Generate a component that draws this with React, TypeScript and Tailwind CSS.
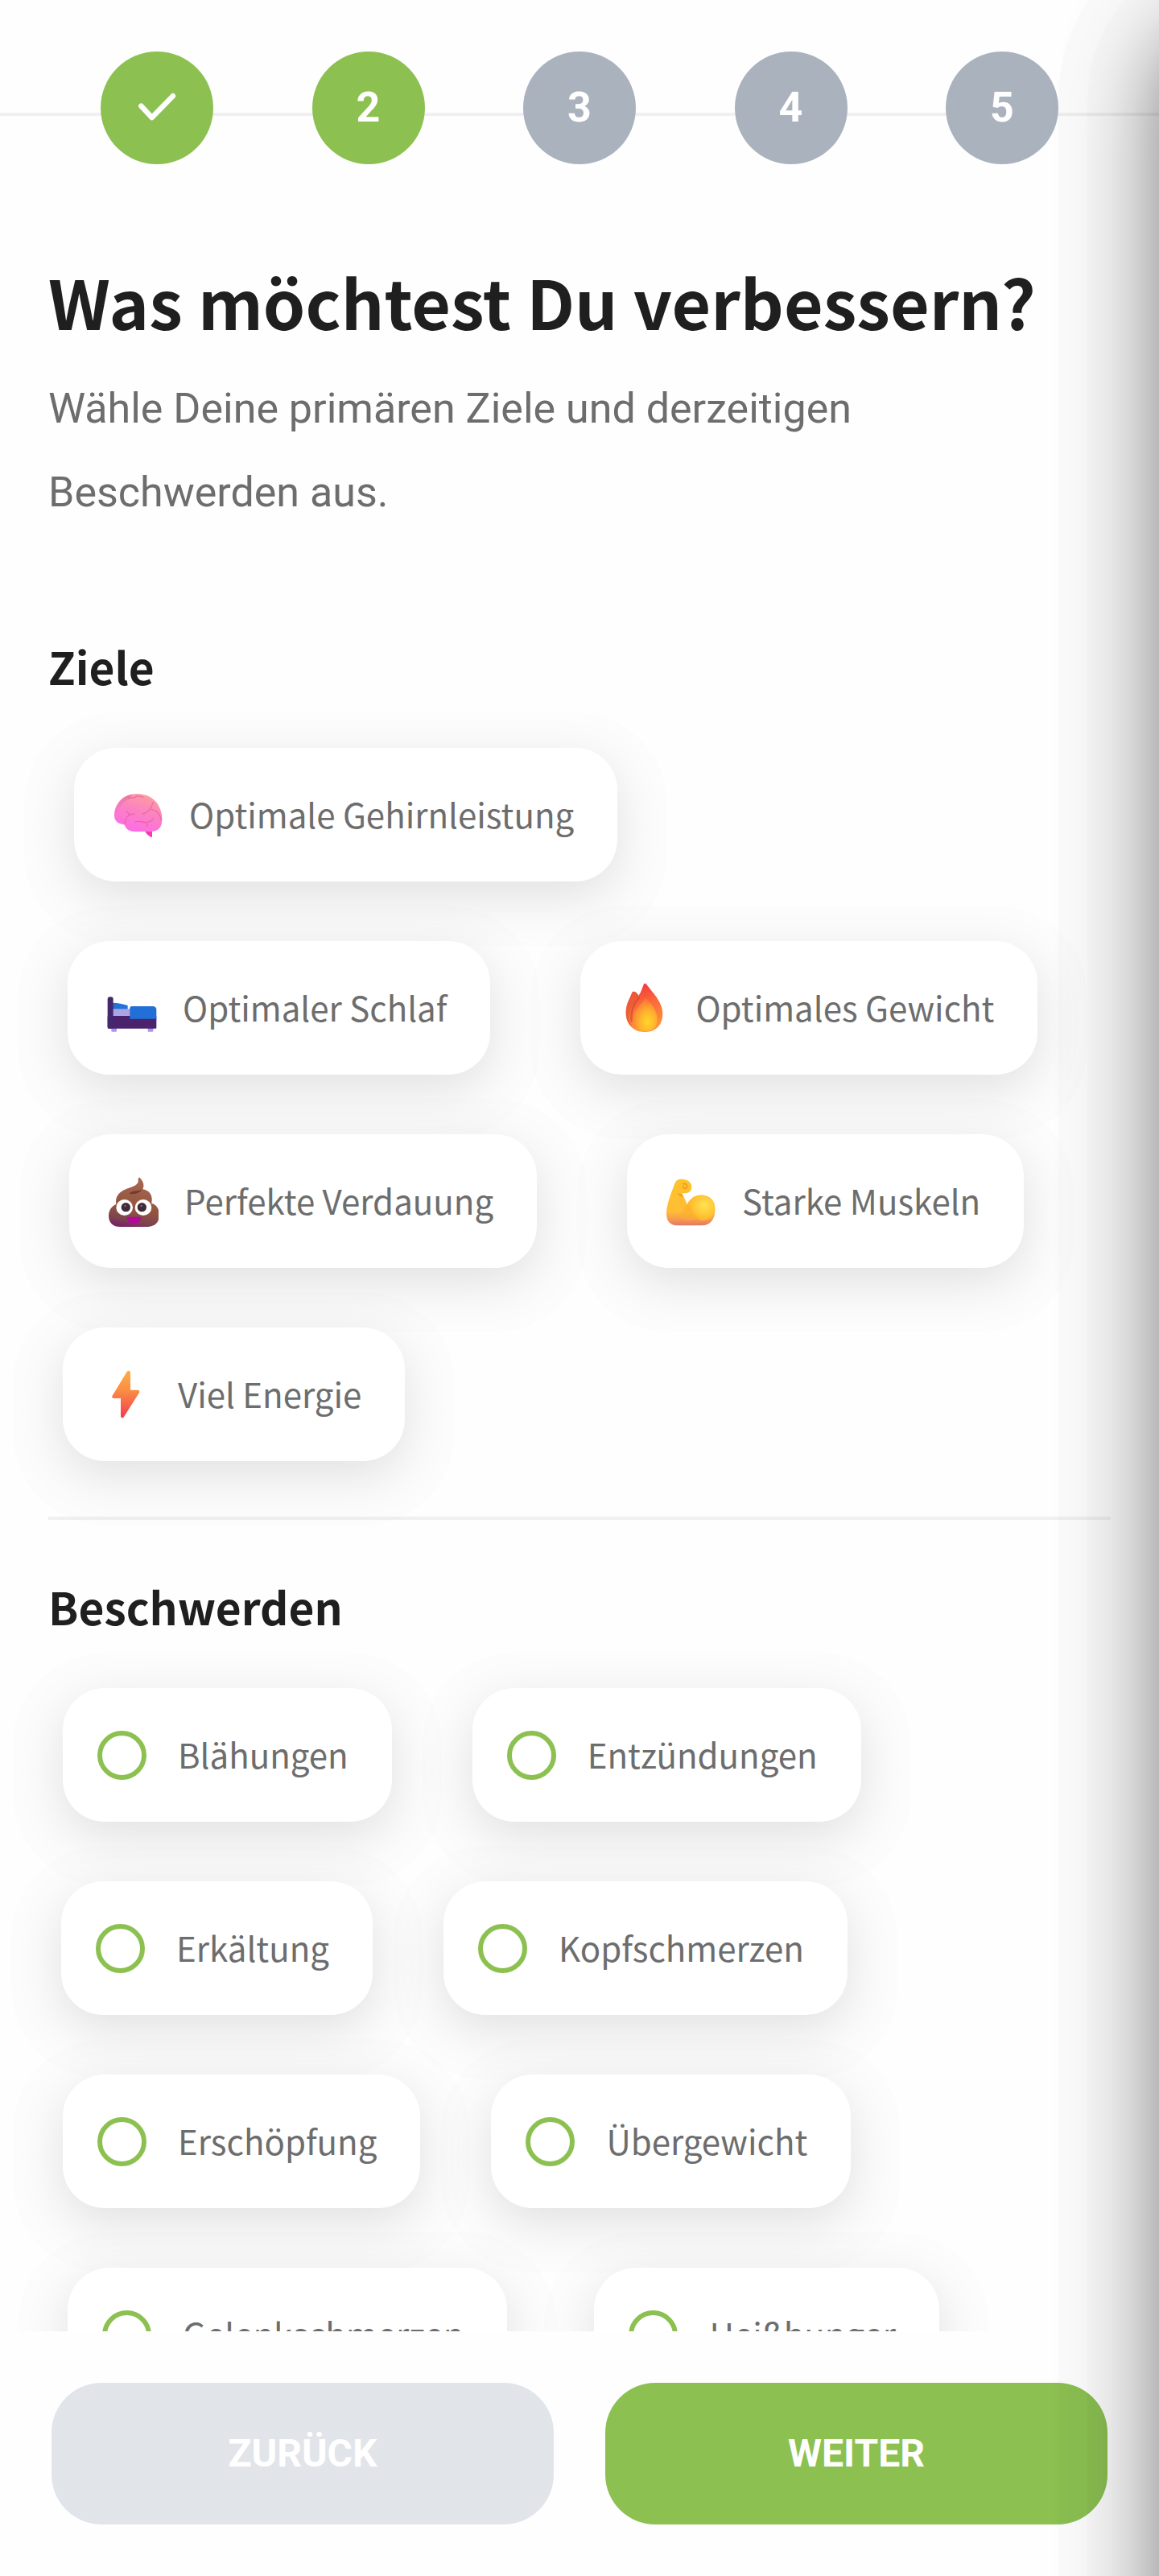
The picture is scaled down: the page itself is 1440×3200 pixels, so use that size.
import React, { useState } from 'react'
import clsx from 'clsx'

interface IGoal {
  label: string
  icon: JSX.Element
}

interface IRow<T> {
  spacing: string
  items: T[]
}

function BrainIcon (): JSX.Element {
  return (
    <svg viewBox="45 54 204 204" className="size-full" aria-hidden="true">
      <defs>
        <linearGradient id="brain" x1="0.75" y1="0" x2="0.35" y2="1">
          <stop offset="0" stopColor="#ff9f9c" />
          <stop offset="0.45" stopColor="#fb83c0" />
          <stop offset="1" stopColor="#ff6be6" />
        </linearGradient>
        <linearGradient id="brainLeft" x1="1" y1="0" x2="0" y2="1">
          <stop offset="0" stopColor="#e56f93" stopOpacity="0.8" />
          <stop offset="1" stopColor="#e05cc0" stopOpacity="0" />
        </linearGradient>
      </defs>
      <path d="M178 214 L207 214 L207 241 C196 238 186 230 178 214Z" fill="#f33bb8" />
      <path d="M150 79 C180 77 214 92 230 120 C243 143 246 166 243 186 C240 207 226 219 203 219 L140 219 C120 219 108 208 104 193 C92 193 74 187 68 172 C62 150 70 122 88 103 C104 86 124 79 150 79Z" fill="url(#brain)" />
      <path d="M70 146 C76 114 96 88 132 80 C128 100 92 104 82 140 C78 152 72 156 70 146Z" fill="url(#brainLeft)" />
      <g fill="none" stroke="#df5f9f" strokeWidth="4" strokeLinecap="round" opacity="0.7">
        <path d="M105 192 C106 176 110 164 122 158 C130 153 136 153 141 155" />
        <path d="M110 145 C118 146 121 151 122 158" />
        <path d="M144 184 C158 175 178 190 195 183 C204 180 209 177 211 170" />
        <path d="M186 186 L189 200" />
        <path d="M172 153 C188 151 202 138 211 110" />
        <path d="M204 136 C222 140 238 150 240 176" />
        <path d="M118 96 C128 88 136 98 145 90 C154 82 164 88 174 92" />
      </g>
    </svg>
  )
}

function BedIcon (): JSX.Element {
  return (
    <svg viewBox="18 54 204 204" className="size-full" aria-hidden="true">
      <rect x="52" y="226" width="20" height="19" rx="3" fill="#a996ee" />
      <rect x="188" y="226" width="20" height="19" rx="3" fill="#a996ee" />
      <path d="M57 137 C76 137 94 141 113 147 L113 165 L57 165Z" fill="#2272d8" />
      <rect x="57" y="160" width="70" height="30" fill="#aaa6e6" />
      <rect x="38" y="186" width="182" height="47" rx="3" fill="#4b226c" />
      <rect x="38" y="115" width="21" height="118" rx="9" fill="#42286f" />
      <path d="M121 157 Q121 150 128 150 L206 150 Q220 150 220 164 L220 197 L121 197Z" fill="#2270d7" />
    </svg>
  )
}

function FireIcon (): JSX.Element {
  return (
    <svg viewBox="15 54 204 204" className="size-full" aria-hidden="true">
      <defs>
        <linearGradient id="fire" x1="0.4" y1="0" x2="0.6" y2="1">
          <stop offset="0" stopColor="#f5383d" />
          <stop offset="0.45" stopColor="#fb6c3b" />
          <stop offset="1" stopColor="#ff9a38" />
        </linearGradient>
        <radialGradient id="fireCore" cx="0.62" cy="0.72" r="0.75">
          <stop offset="0" stopColor="#ffd629" />
          <stop offset="0.45" stopColor="#ffb12f" />
          <stop offset="1" stopColor="#fb6c35" />
        </radialGradient>
      </defs>
      <path d="M84 95 C92 94 98 101 103 110 C114 98 117 78 124 66 C127 62 131 65 134 70 C154 98 194 134 193 180 C192 220 168 246 126 246 C84 246 56 218 56 174 C56 139 72 120 79 99 Q81 95 84 95Z" fill="url(#fire)" />
      <path d="M84 95 C92 94 98 101 103 110 C92 130 70 150 68 192 C69 205 73 216 79 226 C63 214 56 196 56 174 C56 139 72 120 79 99Z" fill="#e95b36" opacity="0.8" />
      <path d="M105 118 C88 138 73 162 77 205" fill="none" stroke="#cf4a31" strokeWidth="7" strokeLinecap="round" opacity="0.7" />
      <path d="M129 120 C147 134 173 164 173 198 C173 228 156 243 128 243 C98 243 80 229 80 203 C80 168 111 145 129 120Z" fill="url(#fireCore)" />
    </svg>
  )
}

function PoopIcon (): JSX.Element {
  return (
    <svg viewBox="27 54 204 204" className="size-full" aria-hidden="true">
      <defs>
        <linearGradient id="poop" x1="0.6" y1="0" x2="0.4" y2="1">
          <stop offset="0" stopColor="#a8674f" />
          <stop offset="0.65" stopColor="#92543f" />
          <stop offset="0.88" stopColor="#7c4250" />
          <stop offset="1" stopColor="#792463" />
        </linearGradient>
      </defs>
      <path d="M160 68 C173 80 180 96 172 112 C193 115 208 131 206 154 L205 164 C224 169 234 186 234 208 C234 236 216 252 190 252 L88 252 C62 252 45 236 45 212 C45 191 56 174 73 168 C68 140 84 122 106 113 C120 106 152 101 155 84 C156 77 153 68 160 68Z" fill="url(#poop)" />
      <path d="M122 128 C142 133 162 126 171 112 C164 119 148 117 136 120 Q126 122 122 128Z" fill="#713b31" />
      <ellipse cx="104" cy="180" rx="31" ry="30" fill="#fff" />
      <ellipse cx="174" cy="180" rx="31" ry="30" fill="#fff" />
      <circle cx="109" cy="179" r="17" fill="#402a38" />
      <circle cx="169" cy="179" r="17" fill="#402a38" />
      <circle cx="107" cy="174" r="4" fill="#796675" />
      <circle cx="167" cy="174" r="4" fill="#796675" />
      <path d="M117 215 L162 215 Q166 215 166 220 C164 233 154 241 140 241 C125 241 115 232 113 220 Q112 215 117 215Z" fill="#b3089b" />
    </svg>
  )
}

function MuscleIcon (): JSX.Element {
  return (
    <svg viewBox="33 54 204 204" className="size-full" aria-hidden="true">
      <defs>
        <linearGradient id="arm" x1="0.3" y1="0" x2="0.3" y2="1">
          <stop offset="0" stopColor="#ffc32b" />
          <stop offset="0.7" stopColor="#ffbd35" />
          <stop offset="0.86" stopColor="#f49c50" />
          <stop offset="1" stopColor="#e47766" />
        </linearGradient>
        <radialGradient id="biceps" cx="0.62" cy="0.4" r="0.65">
          <stop offset="0" stopColor="#ffe34f" />
          <stop offset="0.6" stopColor="#ffc637" />
          <stop offset="1" stopColor="#ffad27" />
        </radialGradient>
      </defs>
      <path d="M82 90 C86 78 98 73 114 75 C133 77 146 89 145 105 C144 120 133 128 117 127 L108 128 C116 137 122 153 128 168 C142 134 196 119 223 154 C230 163 232 175 232 190 C232 226 213 247 183 247 L90 247 C66 247 51 231 51 205 C51 168 67 132 82 90Z" fill="url(#arm)" />
      <path d="M129 174 C136 142 168 127 198 136 C224 145 232 164 232 188 C232 213 214 229 178 229 C154 218 138 202 129 174Z" fill="url(#biceps)" />
      <path d="M126 168 L96 216 C106 226 130 229 170 224Z" fill="#ffad2b" opacity="0.55" />
      <path d="M90 125 C96 127 100 130 108 128 L115 140 C106 140 96 136 90 125Z" fill="#f29419" opacity="0.7" />
      <path d="M112 92 C122 88 131 97 127 106 C122 113 112 108 114 101" fill="none" stroke="#ee9d19" strokeWidth="5" strokeLinecap="round" />
    </svg>
  )
}

function BoltIcon (): JSX.Element {
  return (
    <svg viewBox="33 54 204 204" className="size-full" aria-hidden="true">
      <defs>
        <linearGradient id="bolt" x1="0.5" y1="0" x2="0.5" y2="1">
          <stop offset="0" stopColor="#ffae45" />
          <stop offset="0.4" stopColor="#fb8f43" />
          <stop offset="0.7" stopColor="#f7664a" />
          <stop offset="1" stopColor="#f3394c" />
        </linearGradient>
      </defs>
      <path d="M143 72 Q146 68 151 68 Q156 69 156 74 L156 140 L184 140 Q192 142 189 150 L132 240 Q129 245 124 244 Q120 242 120 237 L120 171 L92 171 Q86 169 88 163Z" fill="url(#bolt)" />
    </svg>
  )
}

const goals: Array<IRow<IGoal>> = [
  { spacing: 'pl-8 gap-28', items: [{ label: 'Optimale Gehirnleistung', icon: <BrainIcon /> }] },
  {
    spacing: 'pl-6 gap-28',
    items: [
      { label: 'Optimaler Schlaf', icon: <BedIcon /> },
      { label: 'Optimales Gewicht', icon: <FireIcon /> }
    ]
  },
  {
    spacing: 'pl-[26px] gap-28',
    items: [
      { label: 'Perfekte Verdauung', icon: <PoopIcon /> },
      { label: 'Starke Muskeln', icon: <MuscleIcon /> }
    ]
  },
  { spacing: 'pl-[18px] gap-28', items: [{ label: 'Viel Energie', icon: <BoltIcon /> }] }
]

const symptoms: Array<IRow<string>> = [
  { spacing: 'pl-[18px] gap-25', items: ['Blähungen', 'Entzündungen'] },
  { spacing: 'pl-4 gap-22', items: ['Erkältung', 'Kopfschmerzen'] },
  { spacing: 'pl-[18px] gap-22', items: ['Erschöpfung', 'Übergewicht'] },
  { spacing: 'pl-6 gap-27', items: ['Gelenkschmerzen', 'Heißhunger'] }
]

const headingFont = "font-['Noto_Sans_CJK_SC',sans-serif]"

const chipClass = clsx(
  headingFont,
  'flex h-[166px] cursor-pointer items-center whitespace-nowrap rounded-[52px] bg-white pl-[43px] pr-[54px]',
  'text-[42px] text-[#6d6d6d] shadow-[0_18px_60px_rgba(0,0,0,0.11),0_18px_0_62px_rgba(0,0,0,0.007)]'
)

function Stepper (): JSX.Element {
  const current = 2

  return (
    <header className="grid shrink-0 items-center pt-16">
      <div className="col-start-1 row-start-1 mt-4 h-1 bg-[#f0f0f0]" />
      <ol className="col-start-1 row-start-1 flex justify-between px-[125px]">
        {[1, 2, 3, 4, 5].map((step) => (
          <li
            key={step}
            className={clsx(
              'z-10 flex size-[140px] items-center justify-center rounded-full text-[52px] font-bold text-white',
              step <= current ? 'bg-[#8cc152]' : 'bg-[#aab2bd]'
            )}
          >
            {step < current
              ? <svg viewBox="0 0 140 140" className="size-full" role="img" aria-label="Erledigt">
                <path d="M50.4 67.7 L63.7 82 L89.9 55.2" fill="none" stroke="#fff" strokeWidth="6.5" strokeLinecap="round" strokeLinejoin="round" />
              </svg>
              : step}
          </li>
        ))}
      </ol>
    </header>
  )
}

function App (): JSX.Element {
  const [selectedGoals, setSelectedGoals] = useState<string[]>([])

  function toggleGoal (label: string): void {
    setSelectedGoals(
      selectedGoals.includes(label)
        ? selectedGoals.filter((goal) => goal !== label)
        : [...selectedGoals, label]
    )
  }

  return (
    <div className="relative flex h-screen flex-col overflow-hidden bg-[#fefefe] font-[Roboto,sans-serif]">
      <Stepper />
      <main className="min-h-0 flex-1 overflow-hidden px-[60px] pt-[118px]">
        <h1 className={clsx(headingFont, 'text-[84px] leading-[104px] font-bold text-[#1f1f1f]')}>
          Was möchtest Du verbessern?
        </h1>
        <p className="mt-[30px] max-w-[1120px] text-[52px] leading-[104px] text-[#6d6d6d]">
          Wähle Deine primären Ziele und derzeitigen Beschwerden aus.
        </p>

        <section className="mt-[127px] border-b-4 border-[#f0f0f0] pb-[69px]">
          <h2 className={clsx(headingFont, 'text-[55px] leading-[72px] font-bold text-[#1f1f1f]')}>
            Ziele
          </h2>
          <div className="mt-[66px] flex flex-col gap-[74px]">
            {goals.map(({ spacing, items }) => (
              <div key={items[0].label} className={clsx('flex', spacing)}>
                {items.map(({ label, icon }) => (
                  <button
                    key={label}
                    type="button"
                    aria-pressed={selectedGoals.includes(label)}
                    onClick={() => { toggleGoal(label) }}
                    className={chipClass}
                  >
                    <span className="mr-8 size-[68px]">{icon}</span>
                    <span className="pb-1">{label}</span>
                  </button>
                ))}
              </div>
            ))}
          </div>
        </section>

        <section className="pt-[71px]">
          <h2 className={clsx(headingFont, 'text-[55px] leading-[72px] font-bold text-[#1f1f1f]')}>
            Beschwerden
          </h2>
          <div className="mt-[66px] flex flex-col gap-[74px]">
            {symptoms.map(({ spacing, items }) => (
              <div key={items[0]} className={clsx('flex', spacing)}>
                {items.map((label) => (
                  <label key={label} htmlFor={label} className={chipClass}>
                    <input
                      id={label}
                      name={label}
                      type="checkbox"
                      className="mr-[39px] size-[61px] appearance-none rounded-full border-6 border-[#8cc152] checked:bg-[#8cc152]"
                    />
                    <span className="pb-1">{label}</span>
                  </label>
                ))}
              </div>
            ))}
          </div>
        </section>
      </main>

      <footer className="grid shrink-0 grid-cols-2 gap-16 p-16">
        <button type="button" className="h-44 rounded-[62px] bg-[#e1e5ea] text-[48px] font-bold text-white">
          ZURÜCK
        </button>
        <button type="button" className="h-44 rounded-[62px] bg-[#8cc152] text-[48px] font-bold text-white">
          WEITER
        </button>
      </footer>

      {/* shadow cast by the neighbouring page */}
      <div className="pointer-events-none absolute top-0 -bottom-40 left-full z-20 w-80 rounded-[100px] shadow-[0_24px_110px_rgba(0,0,0,0.5),0_24px_0_89px_rgba(0,0,0,0.012),0_24px_0_125px_rgba(0,0,0,0.014)]" />
    </div>
  )
}

export default App
